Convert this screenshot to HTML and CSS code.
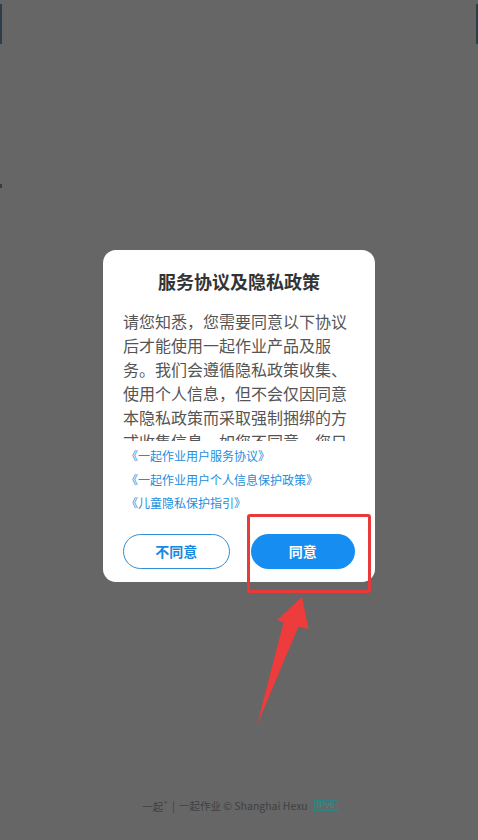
FILE: index.html
```html
<!DOCTYPE html>
<html lang="zh-CN">
<head>
<meta charset="utf-8">
<title>服务协议及隐私政策</title>
<link rel="stylesheet" href="styles.css">
</head>
<body>
<div class="page">
  <span class="edge edge-left"></span>
  <span class="edge edge-right"></span>
  <span class="edge edge-mark"></span>

  <main class="stage">
    <section class="dialog">
      <h1 class="dialog-title">服务协议及隐私政策</h1>
      <div class="dialog-scroll">
        <p class="dialog-text">请您知悉，您需要同意以下协议后才能使用一起作业产品及服务。我们会遵循隐私政策收集、使用个人信息，但不会仅因同意本隐私政策而采取强制捆绑的方式收集信息，如您不同意，您只能使用浏览功能。</p>
      </div>
      <ul class="dialog-links">
        <li><a class="doc-link">《一起作业用户服务协议》</a></li>
        <li><a class="doc-link">《一起作业用户个人信息保护政策》</a></li>
        <li><a class="doc-link">《儿童隐私保护指引》</a></li>
      </ul>
      <div class="dialog-actions">
        <button class="btn btn-outline">不同意</button>
        <button class="btn btn-primary">同意</button>
      </div>
    </section>
  </main>

  <footer class="footer">
    <span class="brand">一起<sup class="reg">®</sup></span>
    <span class="sep">|</span>
    <span class="copy">一起作业 © Shanghai Hexu</span>
    <span class="ipv6">IPv6</span>
  </footer>

  <div class="highlight-box"></div>
  <svg class="arrow" width="66" height="140" viewBox="0 0 66 140">
    <polygon points="52,7 58.5,39 48.5,36.5 7,135 33.5,32.5 27,30" fill="#ee3b3b"/>
  </svg>
</div>
</body>
</html>
```

FILE: styles.css
```css
* { box-sizing: border-box; }

html, body {
  margin: 0;
  padding: 0;
}

body {
  background: #666666;
  font-family: "Noto Sans CJK SC", "Noto Sans", sans-serif;
}

.page {
  position: relative;
  width: 478px;
  height: 840px;
  display: flex;
  flex-direction: column;
  overflow: hidden;
}

.edge {
  position: absolute;
  width: 2px;
  background: #2c3e4c;
}
.edge-left { left: 0; top: 4px; height: 40px; }
.edge-right { right: 0; top: 4px; height: 40px; }
.edge-mark { left: 0; top: 184px; height: 4px; }

.stage {
  padding-top: 250px;
  display: flex;
  justify-content: center;
}

.dialog {
  width: 272px;
  background: #ffffff;
  border-radius: 13px;
  padding: 19px 20px 13px;
}

.dialog-title {
  margin: 0;
  text-align: center;
  font-size: 18px;
  line-height: 24px;
  font-weight: 700;
  color: #333333;
}

.dialog-scroll {
  margin-top: 16px;
  height: 132px;
  overflow: hidden;
}

.dialog-text {
  margin: 0;
  font-size: 16px;
  line-height: 24px;
  color: #555555;
  line-break: strict;
}

.dialog-links {
  list-style: none;
  margin: 3px 0 0;
  padding: 0 0 0 3px;
}

.dialog-links li {
  font-size: 12px;
  line-height: 23.5px;
}

.doc-link {
  color: #1c8ee0;
  text-decoration: none;
}

.dialog-actions {
  display: flex;
  gap: 21px;
  margin-top: 19px;
}

.btn {
  flex: 1;
  height: 35px;
  border-radius: 18px;
  font-family: "Noto Sans CJK SC", "Noto Sans", sans-serif;
  font-size: 14px;
  font-weight: 700;
  padding: 0;
  cursor: pointer;
}

.btn-outline {
  background: #ffffff;
  color: #1a88dc;
  border: 1.5px solid #2f8fd8;
}

.btn-primary {
  background: #168df0;
  color: #ffffff;
  border: none;
}

.footer {
  margin-top: auto;
  padding-bottom: 25px;
  padding-left: 2px;
  display: flex;
  justify-content: center;
  align-items: center;
  font-size: 10.5px;
  line-height: 16px;
  color: #404040;
}

.footer .reg {
  font-size: 6px;
  vertical-align: 5px;
  margin-left: 1px;
}

.footer .sep {
  margin: 0 4px 0 5px;
}

.ipv6 {
  margin-left: 6px;
  border: 1px solid #2b8585;
  color: #2f8f8f;
  font-family: "Liberation Sans", sans-serif;
  font-size: 9px;
  line-height: 9px;
  padding: 0 2px;
}

.highlight-box {
  position: absolute;
  left: 247px;
  top: 514px;
  width: 124px;
  height: 79px;
  border: 3px solid #e83a3a;
  border-radius: 3px;
}

.arrow {
  position: absolute;
  left: 250px;
  top: 590px;
}
```
